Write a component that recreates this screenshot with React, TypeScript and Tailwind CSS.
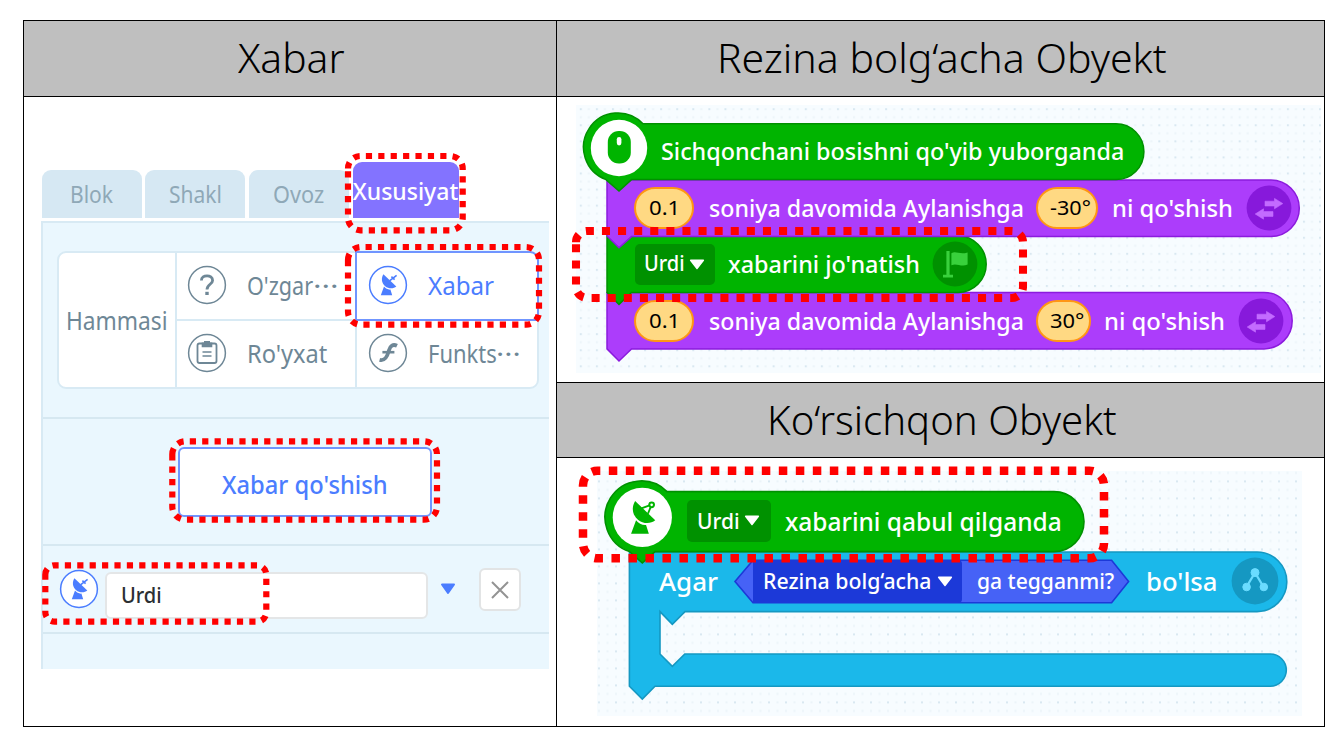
import { useLayoutEffect, useRef } from "react";
import type { ReactNode } from "react";

/** One line of text, condensed or widened to fill the width of its box. */
function Fit({ className, children }: { className: string; children: string }) {
  const box = useRef<HTMLSpanElement>(null);
  const inner = useRef<HTMLSpanElement>(null);
  useLayoutEffect(() => {
    if (box.current && inner.current) {
      const k = box.current.clientWidth / inner.current.offsetWidth;
      inner.current.style.transform = `scaleX(${k})`;
    }
  }, []);
  return (
    <span ref={box} className={`block shrink-0 whitespace-nowrap ${className}`}>
      <span ref={inner} className="inline-block origin-left">
        {children}
      </span>
    </span>
  );
}

function Heading({ children }: { children: ReactNode }) {
  return (
    <div className="flex h-full items-center justify-center bg-[#bfbfbf] pb-px pl-[2px] text-[40px] leading-none font-light text-black">
      {children}
    </div>
  );
}

function Dish({ ring = false }: { ring?: boolean }) {
  return (
    <g fill="currentColor" stroke="none">
      <path d="M-4.6 -10.8 L8.3 1.6 C5.4 4 0.6 4 -2.8 1.2 C-6.6 -2 -7 -6.8 -4.6 -10.8Z" />
      <path d="M-4 1.6 C-2.4 3.8 0 4.8 2.4 4.6 L4.2 10.3 H-7.2Z" />
      {ring ? (
        <>
          <path d="M-0.6 -6 L6 -8.4 L3.6 -2.6" fill="none" stroke="currentColor" strokeWidth="1.2" />
          <circle cx="6" cy="-8.3" r="1.5" fill="white" stroke="currentColor" strokeWidth="1.3" />
        </>
      ) : (
        <path d="M1.5 -4.2 L8.6 -9.6 M3.4 -8.4 L6.6 -5.4" fill="none" stroke="currentColor" strokeWidth="1.6" />
      )}
    </g>
  );
}

function RoundIcon({ children }: { children?: ReactNode }) {
  return (
    <svg className="-mt-[3px] h-[40px] w-[40px] shrink-0" viewBox="-20 -20 40 40">
      <circle r="18.4" fill="white" stroke="currentColor" strokeWidth="1.5" />
      {children}
    </svg>
  );
}

function Tab({ children }: { children: ReactNode }) {
  return (
    <div className="flex h-[48px] w-[100px] items-center justify-center rounded-t-[9px] bg-[#d6e8f3]">
      {children}
    </div>
  );
}

function PropertyPanel() {
  return (
    <div className="flex h-full flex-col bg-white">
      <div className="flex h-[121px] items-end gap-[3.7px] pl-[17.6px] text-[23px] leading-none font-[450] text-[#8fa8b7]">
        <Tab>
          <Fit className="w-[43px]">Blok</Fit>
        </Tab>
        <Tab>
          <Fit className="w-[53px]">Shakl</Fit>
        </Tab>
        <Tab>
          <Fit className="w-[51px]">Ovoz</Fit>
        </Tab>
        <div className="flex h-[56px] w-[106px] items-center justify-center rounded-t-[9px] bg-[#8373ff] pt-[2px] font-medium text-white">
          <Fit className="w-[106px]">Xususiyat</Fit>
        </div>
      </div>
      <div className="mt-[3px] ml-[17px] flex h-[448px] w-[508px] flex-col border-t-2 border-l-2 border-[#d8eaf4] bg-[#eaf7fe]">
        <div className="h-[196px] border-b-2 border-[#d6e8f1] pt-[28px] pl-[14px] text-[24.5px] leading-none font-[450] text-[#6e8796]">
          <div className="grid h-[138px] w-[482px] grid-cols-[118px_180px_1fr] rounded-[9px] border-2 border-[#d8eaf4] bg-white">
            <div className="flex items-center justify-center border-r-2 border-[#d8eaf4] pt-[2px]">
              <Fit className="w-[102px]">Hammasi</Fit>
            </div>
            <div className="grid grid-rows-[68px_1fr]">
              <div className="flex items-center border-b-2 border-[#d8eaf4] pl-[10px]">
                <RoundIcon>
                  <path
                    d="M-5.6 -4.6 C-5.6 -10.6 5.6 -10.8 5.6 -4.6 C5.6 -0.8 0 -0.6 0 4.4"
                    fill="none"
                    stroke="currentColor"
                    strokeWidth="2.8"
                  />
                  <rect x="-1.7" y="6.8" width="3.4" height="3.2" fill="currentColor" />
                </RoundIcon>
                <Fit className="ml-[20px] w-[66px]">O'zgar</Fit>
                <Fit className="w-[26px]">···</Fit>
              </div>
              <div className="flex items-center pl-[10px]">
                <RoundIcon>
                  <rect x="-9.5" y="-9.5" width="19" height="19.5" rx="2" fill="none" stroke="currentColor" strokeWidth="1.8" />
                  <path d="M-5.3 -10.5 H-3 V-12 H3 V-10.5 H5.3 V-5.8 H-5.3Z" fill="currentColor" />
                  <path d="M-4.5 -1 H4.5 M-4.5 3 H4.5" stroke="currentColor" strokeWidth="1.4" />
                </RoundIcon>
                <Fit className="ml-[20px] w-[80px]">Ro'yxat</Fit>
              </div>
            </div>
            <div className="-mt-[2px] -mr-[2px] -ml-[2px] grid grid-rows-[70px_1fr]">
              <div className="flex items-center rounded-tr-[9px] border-2 border-[#7095ff] pl-[11px] text-[#4b7dff]">
                <RoundIcon>
                  <Dish />
                </RoundIcon>
                <Fit className="ml-[20px] w-[66px]">Xabar</Fit>
              </div>
              <div className="flex items-center border-l-2 border-[#d8eaf4] pl-[11px]">
                <RoundIcon>
                  <path d="M9 -7.2 C5 -9.2 2.2 -7.2 1 -2.8 C-0.4 2.4 -2.4 8.4 -8.4 6.8" fill="none" stroke="currentColor" strokeWidth="3.8" />
                  <path d="M-5.6 -0.8 H6.4" stroke="currentColor" strokeWidth="2.6" />
                </RoundIcon>
                <Fit className="ml-[20px] w-[69px]">Funkts</Fit>
                <Fit className="-ml-[1px] w-[25px]">···</Fit>
              </div>
            </div>
          </div>
        </div>
        <div className="flex h-[127px] border-b-2 border-[#d6e8f1] pt-[28px] pl-[135px]">
          <button className="flex h-[70px] w-[254px] items-center justify-center rounded-[6px] border-2 border-[#7095ff] bg-white pt-[4px] text-[25px] leading-none font-medium text-[#4b7dff]">
            <Fit className="w-[166px]">Xabar qo'shish</Fit>
          </button>
        </div>
        <div className="flex h-[88px] border-b-2 border-[#d6e8f1] pl-[16px] text-[#4b7dff]">
          <div className="pt-[26px]">
            <RoundIcon>
              <Dish />
            </RoundIcon>
          </div>
          <div className="mt-[26px] ml-[6px] flex h-[47px] w-[323px] items-center rounded-[6px] border-2 border-[#e4e6e7] bg-white pb-[4px] pl-[14px] text-[22px] leading-none font-medium text-[#2b2f33]">
            <Fit className="w-[41px]">Urdi</Fit>
          </div>
          <svg className="mt-[37px] ml-[12px] h-[12px] w-[16px]" viewBox="0 0 16 12">
            <path d="M2 1.5 H14 L8 10Z" fill="currentColor" stroke="currentColor" strokeWidth="2" strokeLinejoin="round" />
          </svg>
          <button className="mt-[22px] ml-[23px] flex h-[43px] w-[42px] items-center justify-center rounded-[6px] border-2 border-[#e2e4e5] bg-white text-[#939393]">
            <svg className="h-[18px] w-[18px]" viewBox="0 0 18 18">
              <path d="M1 1 L17 17 M17 1 L1 17" stroke="currentColor" strokeWidth="2" />
            </svg>
          </button>
        </div>
      </div>
    </div>
  );
}

function Caret({ className }: { className: string }) {
  return (
    <svg className={`h-[11px] w-[16px] shrink-0 ${className}`} viewBox="0 0 16 11">
      <path d="M1.6 1.3 H14.4 L8 9.6Z" fill="white" stroke="white" strokeWidth="1.4" strokeLinejoin="round" />
    </svg>
  );
}

function Value({ className, children }: { className: string; children: ReactNode }) {
  return (
    <div
      className={`flex h-[42px] shrink-0 items-center rounded-full border-2 border-[#ff9614] bg-[#ffd983] text-[20px] leading-none font-normal text-black ${className}`}
    >
      {children}
    </div>
  );
}

function MoveIcon({ className }: { className: string }) {
  return (
    <svg className={`h-[46px] w-[46px] shrink-0 ${className}`} viewBox="-23 -23 46 46">
      <circle r="22.4" fill="#8719db" />
      <path
        d="M-4 -6.8 H5.5 V-9.6 L13.8 -4.4 L5.5 0.8 V-2 H-4Z M4 3.6 H-5.5 V0.8 L-13.8 6 L-5.5 11.2 V8.4 H4Z"
        fill="#c36bff"
        stroke="#c36bff"
        strokeWidth="0.6"
        strokeLinejoin="round"
      />
    </svg>
  );
}

function DotGrid({ id, x, y, step }: { id: string; x: number; y: number; step: number }) {
  return (
    <pattern id={id} x={x} y={y} width={step} height={step} patternUnits="userSpaceOnUse">
      <rect width={step} height={step} fill="#f7fcff" />
      <rect x="0" y="0" width="2" height="2" fill="#d9e8f1" />
      <rect x={step / 2} y="0" width="2" height="2" fill="#ecf4f9" />
      <rect x="0" y={step / 2} width="2" height="2" fill="#ecf4f9" />
      <rect x={step / 2} y={step / 2} width="2" height="2" fill="#ecf4f9" />
    </pattern>
  );
}

function SenderScript() {
  return (
    <div className="relative mt-[8px] ml-[19px] h-[268px] w-[745px]">
      <svg className="absolute inset-0 h-full w-full" viewBox="576 105 745 268">
        <defs>
          <DotGrid id="dots-a" x={579.8} y={108.2} step={16.07} />
        </defs>
        <rect x="576" y="105" width="745" height="268" fill="url(#dots-a)" />
        <path
          d="M607 292.5 H1264 A28.2 28.2 0 0 1 1264 348.9 H631.5 L619 361 L607 348.9Z"
          fill="#ac3dfb"
          stroke="#8b1bdd"
          strokeWidth="1.5"
        />
        <path
          d="M607 236 H958 A28.2 28.2 0 0 1 958 292.4 H631.5 L619 304.4 L607 292.4Z"
          fill="#00b400"
          stroke="#009100"
          strokeWidth="1.5"
        />
        <path
          d="M607 180 H1271 A28.2 28.2 0 0 1 1271 236.6 H631.5 L619 247.8 L607 236Z"
          fill="#ac3dfb"
          stroke="#8b1bdd"
          strokeWidth="1.5"
        />
        <path
          d="M643 123.8 H1116 A27.9 27.9 0 0 1 1116 179.6 H631.5 L619 191 L606 179.6 A34.4 34.4 0 1 1 643 123.8Z"
          fill="#00b400"
          stroke="#009100"
          strokeWidth="1.5"
        />
        <circle cx="619" cy="148" r="28.2" fill="white" />
        <rect x="607.8" y="131" width="23" height="32.5" rx="11" fill="#00b400" />
        <rect x="616.8" y="137" width="4.6" height="8.4" rx="2.3" fill="white" />
      </svg>
      <div className="relative flex flex-col pt-[18.5px] text-[24px] leading-none font-medium text-white">
        <div className="flex h-[56.3px] items-center pb-px pl-[85px]">
          <Fit className="w-[463px]">Sichqonchani bosishni qo'yib yuborganda</Fit>
        </div>
        <div className="flex h-[56.3px] items-center pl-[58px]">
          <Value className="w-[60px] pl-[13px]">
            <Fit className="w-[31px]">0.1</Fit>
          </Value>
          <Fit className="ml-[15px] w-[315px]">soniya davomida Aylanishga</Fit>
          <Value className="ml-[12px] w-[62px] pl-[12px]">
            <Fit className="w-[41px]">-30°</Fit>
          </Value>
          <Fit className="ml-[14px] w-[121px]">ni qo'shish</Fit>
          <MoveIcon className="ml-[13px]" />
        </div>
        <div className="flex h-[56.3px] items-center pl-[59px]">
          <div className="flex h-[41px] w-[80px] items-center rounded-[5px] bg-[#009100] pb-px pl-[9px] text-[21px]">
            <Fit className="w-[41px]">Urdi</Fit>
            <Caret className="mt-px ml-[4px]" />
          </div>
          <Fit className="ml-[13px] w-[192px]">xabarini jo'natish</Fit>
          <svg className="ml-[12px] h-[46px] w-[46px]" viewBox="-23 -23 46 46">
            <circle r="22.4" fill="#009100" />
            <path
              d="M-8.6 -13 H-5.4 V10.8 H-2 V13.4 H-12 V10.8 H-8.6Z M-3.6 -10.8 C1 -13.4 5 -8.8 12.6 -11.6 V0.6 C6 3.4 1.8 -1.4 -3.6 1.2Z"
              fill="#39d13c"
            />
          </svg>
        </div>
        <div className="flex h-[56.3px] items-center pl-[58px]">
          <Value className="w-[60px] pl-[13px]">
            <Fit className="w-[31px]">0.1</Fit>
          </Value>
          <Fit className="ml-[15px] w-[315px]">soniya davomida Aylanishga</Fit>
          <Value className="ml-[12px] w-[55px] pl-[12px]">
            <Fit className="w-[34px]">30°</Fit>
          </Value>
          <Fit className="ml-[13px] w-[121px]">ni qo'shish</Fit>
          <MoveIcon className="ml-[13px]" />
        </div>
      </div>
    </div>
  );
}

function ReceiverScript() {
  return (
    <div className="relative mt-[13px] ml-[40px] h-[245px] w-[705px]">
      <svg className="absolute inset-0 h-full w-full" viewBox="597 471 705 245">
        <defs>
          <DotGrid id="dots-b" x={598} y={480.4} step={17} />
        </defs>
        <rect x="597" y="471" width="705" height="245" fill="url(#dots-b)" />
        <path
          d="M629.4 552 H1257 A29.8 29.8 0 0 1 1257 611.6 H685 L672.3 624.4 L660 611.6 V654 L672.3 666.4 L684.8 654 H1270.2 A16.1 16.1 0 0 1 1270.2 686.2 H655 L642.3 699 L629.4 686.2Z"
          fill="#1bb8ea"
          stroke="#1598c2"
          strokeWidth="1.6"
        />
        <path
          d="M667 491.6 H1054 A29.8 29.8 0 0 1 1054 551.6 H655 L642.3 563 L629.6 551.6 A36.3 36.3 0 1 1 667 491.6Z"
          fill="#00b400"
          stroke="#009100"
          strokeWidth="1.6"
        />
        <circle cx="642.3" cy="517.4" r="29.6" fill="white" />
        <g transform="translate(642.3 517.8) scale(1.56)" className="text-[#00b400]">
          <Dish ring />
        </g>
        <path d="M735 581.4 L753 560.2 H1111.6 L1128.6 581.4 L1111.6 602.8 H753Z" fill="#4662f6" stroke="#1c39d8" strokeWidth="1.6" />
        <path d="M753 560 H958 Q962 560 962 564 V599 Q962 603 958 603 H753Z" fill="#1c39d8" />
      </svg>
      <div className="relative flex flex-col pt-[20px] text-[26px] leading-none font-medium text-white">
        <div className="flex h-[60.3px] items-center pb-px pl-[90px]">
          <div className="flex h-[42px] w-[84px] items-center rounded-[5px] bg-[#009100] pb-[2px] pl-[10px] text-[22px]">
            <Fit className="w-[43px]">Urdi</Fit>
            <Caret className="mt-[2px] ml-[4px]" />
          </div>
          <Fit className="ml-[14px] w-[277px]">xabarini qabul qilganda</Fit>
        </div>
        <div className="flex h-[60.3px] items-center pl-[62px]">
          <Fit className="w-[59px]">Agar</Fit>
          <div className="ml-[45px] flex items-center pb-[2px] text-[22px]">
            <Fit className="w-[169px]">Rezina bolg‘acha</Fit>
            <Caret className="mt-[2px] ml-[5px]" />
            <Fit className="ml-[24px] w-[137px]">ga tegganmi?</Fit>
          </div>
          <Fit className="ml-[32px] w-[71px]">bo'lsa</Fit>
          <svg className="ml-[14px] h-[48px] w-[48px] shrink-0" viewBox="-24 -24 48 48">
            <circle r="23.4" fill="#1598c2" />
            <g fill="#6adcff" stroke="#6adcff">
              <path d="M-8.4 5.6 L0 -8.4 L8.4 5.6" fill="none" strokeWidth="2.2" />
              <circle cy="-8.4" r="4" />
              <circle cx="-8.4" cy="6" r="3.8" />
              <circle cx="8.8" cy="6" r="3.8" />
            </g>
          </svg>
        </div>
      </div>
    </div>
  );
}

type Mark = { x1: number; y1: number; x2: number; y2: number; w: number };

const marks: Mark[] = [
  { x1: 348, y1: 156, x2: 462.7, y2: 230.3, w: 6.2 },
  { x1: 348, y1: 247, x2: 539, y2: 324.7, w: 6.2 },
  { x1: 172.3, y1: 441.3, x2: 437, y2: 519.7, w: 6.2 },
  { x1: 45.3, y1: 565.3, x2: 266.3, y2: 621.7, w: 6.2 },
  { x1: 576, y1: 231, x2: 1023, y2: 298, w: 8.05 },
  { x1: 583, y1: 470.7, x2: 1104, y2: 558.3, w: 8.5 },
];

function outline({ x1, y1, x2, y2 }: Mark) {
  const r = (y2 - y1) / 6;
  return `M${x1} ${y1 + r} A${r} ${r} 0 0 1 ${x1 + r} ${y1} H${x2 - r} A${r} ${r} 0 0 1 ${x2} ${y1 + r} V${y2 - r} A${r} ${r} 0 0 1 ${x2 - r} ${y2} H${x1 + r} A${r} ${r} 0 0 1 ${x1} ${y2 - r}Z`;
}

export default function App() {
  return (
    <main className="relative h-[749px] w-[1342px] overflow-hidden bg-white pt-[20px] pl-[23px] font-['Noto_Sans','Open_Sans',sans-serif]">
      <div className="grid h-[707px] w-[1302px] grid-cols-[532px_767px] gap-px border border-black bg-black">
        <section className="grid grid-rows-[75px_1fr] gap-px">
          <Heading>
            <Fit className="w-[107px]">Xabar</Fit>
          </Heading>
          <PropertyPanel />
        </section>
        <section className="grid grid-rows-[75px_285px_74px_1fr] gap-px">
          <Heading>
            <Fit className="w-[450px]">Rezina bolg‘acha Obyekt</Fit>
          </Heading>
          <div className="bg-white">
            <SenderScript />
          </div>
          <Heading>
            <Fit className="w-[350px]">Ko‘rsichqon Obyekt</Fit>
          </Heading>
          <div className="flex bg-white">
            <ReceiverScript />
          </div>
        </section>
      </div>
      <svg className="pointer-events-none absolute inset-0 h-full w-full" viewBox="0 0 1342 749">
        {marks.map((m) => (
          <path key={`${m.x1}-${m.y1}`} d={outline(m)} fill="none" stroke="#ff0000" strokeWidth={m.w} strokeDasharray={m.w} />
        ))}
      </svg>
    </main>
  );
}
